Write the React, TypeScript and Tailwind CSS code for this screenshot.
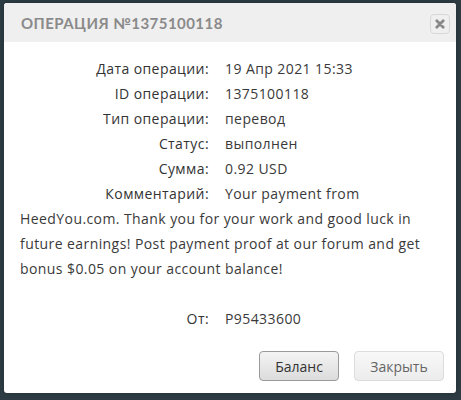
import React from "react";

const rows: [string, string][] = [
  ["Дата операции:", "19 Апр 2021 15:33"],
  ["ID операции:", "1375100118"],
  ["Тип операции:", "перевод"],
  ["Статус:", "выполнен"],
  ["Сумма:", "0.92 USD"],
];

function Label({ children }: { children: React.ReactNode }) {
  return (
    <span className="inline-block w-[189px] text-right mr-[16px] text-[#333]">{children}</span>
  );
}

export default function App() {
  return (
    <div className="w-full h-[400px] bg-[#2e3d45] pt-[3px] pl-[4px] overflow-hidden">
      <div className="w-[452px] h-[390px] bg-white rounded-[3px] overflow-hidden flex flex-col shadow-[0_0_6px_rgba(0,0,0,0.3)]">
        <div className="h-[39px] shrink-0 bg-[#efefef] flex items-center justify-between pl-[17px] pr-[6px]">
          <span
            className="text-[15px] font-bold tracking-[0.45px] text-[#8a8a8a] mt-[1px]"
            style={{ fontFamily: "Lato, 'Noto Sans', sans-serif" }}
          >
            ОПЕРАЦИЯ №1375100118
          </span>
          <button className="w-[20px] h-[20px] rounded-[4px] border border-[#d8d8d8] bg-[#efefef] flex items-center justify-center mt-[3px]">
            <svg width="10" height="10" viewBox="0 0 10 10">
              <path d="M1.8 1.8 L8.2 8.2 M8.2 1.8 L1.8 8.2" stroke="#888" strokeWidth="2.8" strokeLinecap="round" />
            </svg>
          </button>
        </div>
        <div
          className="pt-[14px] px-[16px] text-[14px] leading-[25px] tracking-[0.42px] text-[#3a3a3a]"
          style={{ fontFamily: "'Open Sans', 'Noto Sans', sans-serif" }}
        >
          {rows.map(([l, v]) => (
            <div key={l}>
              <Label>{l}</Label>
              <span>{v}</span>
            </div>
          ))}
          <div className="whitespace-nowrap">
            <Label>Комментарий:</Label>
            <span>
              Your payment from
              <br />
              HeedYou.com. Thank you for your work and good luck in
              <br />
              future earnings! Post payment proof at our forum and get
              <br />
              bonus $0.05 on your account balance!
            </span>
          </div>
          <div className="h-[25px]" />
          <div>
            <Label>От:</Label>
            <span>P95433600</span>
          </div>
        </div>
        <div
          className="mt-auto flex justify-end gap-[15px] pr-[12px] pb-[12px]"
          style={{ fontFamily: "'Open Sans', 'Noto Sans', sans-serif" }}
        >
          <button className="w-[80px] h-[30px] rounded-[4px] border border-[#9a9a9a] bg-gradient-to-b from-[#f4f4f4] to-[#dcdcdc] text-[14px] text-[#333]">
            Баланс
          </button>
          <button className="w-[90px] h-[30px] rounded-[4px] border border-[#dcdcdc] bg-gradient-to-b from-[#f8f8f8] to-[#ececec] text-[14px] text-[#666]">
            Закрыть
          </button>
        </div>
      </div>
    </div>
  );
}
